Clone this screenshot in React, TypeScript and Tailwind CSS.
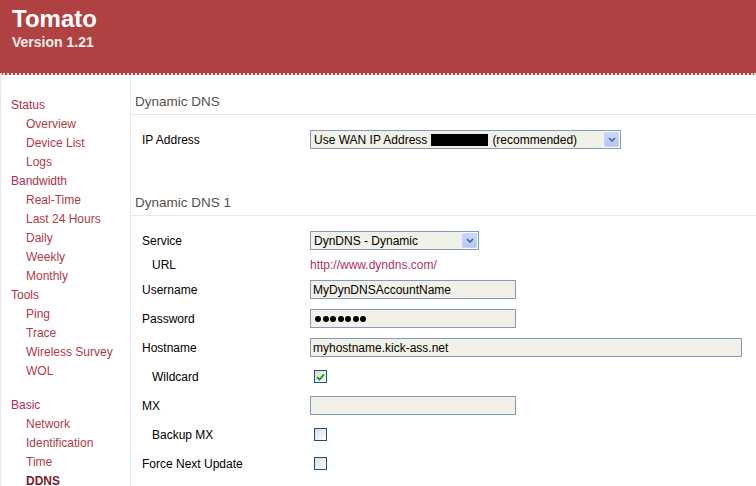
import React from 'react';

const menu = [
  { title: 'Status', items: ['Overview', 'Device List', 'Logs'] },
  { title: 'Bandwidth', items: ['Real-Time', 'Last 24 Hours', 'Daily', 'Weekly', 'Monthly'] },
  { title: 'Tools', items: ['Ping', 'Trace', 'Wireless Survey', 'WOL'] },
];

const basicMenu = ['Network', 'Identification', 'Time', 'DDNS'];

const Arrow = () => (
  <span className="flex h-[15px] w-[15px] items-center justify-center rounded-[1px] border border-[#c3d3fd] bg-gradient-to-b from-[#c9dafd] to-[#b3c7f3]">
    <svg width="8" height="5" viewBox="0 0 8 5">
      <path d="M1 1 L4 4 L7 1" fill="none" stroke="#4d6185" strokeWidth="1.6" />
    </svg>
  </span>
);

const Checkbox = ({ checked }: { checked?: boolean }) => (
  <span className="ml-[4px] flex h-[13px] w-[13px] items-center justify-center border border-[#1c5180] bg-gradient-to-br from-[#dcdcd7] to-white">
    {checked && (
      <svg width="9" height="8" viewBox="0 0 9 8">
        <path d="M1 4 L3.5 6.5 L8 1.5" fill="none" stroke="#21a121" strokeWidth="2" />
      </svg>
    )}
  </span>
);

const TextBox = ({ value, width }: { value: string; width: string }) => (
  <input
    type="text"
    readOnly
    value={value}
    className={`h-[19px] ${width} border border-[#7f9db9] bg-[#f2f1e9] px-[2px] text-[12px] text-black outline-none`}
  />
);

const Row = ({ label, indent, children, h = 'h-[29px]' }: { label: string; indent?: boolean; children?: React.ReactNode; h?: string }) => (
  <div className={`flex ${h} items-center pl-[11px]`}>
    <div className={`w-[168px] text-[12px] text-black ${indent ? 'pl-[10px]' : ''}`}>{label}</div>
    <div className="flex items-center">{children}</div>
  </div>
);

const Heading = ({ children }: { children: React.ReactNode }) => (
  <div className="border-b border-[#e6e6e6] pb-[3px] pl-[4px] text-[13.5px] leading-[18px] text-[#57504c]">{children}</div>
);

export default function App() {
  return (
    <div className="h-[486px] w-[756px] overflow-hidden bg-white font-['Liberation_Sans',Arial,sans-serif]">
      <div className="h-[75px] border-b-2 border-dotted border-[#dcdcdc] bg-[#b04243] pl-[12px] pt-[5px]">
        <div className="text-[24px] font-bold leading-[28px] text-white">Tomato</div>
        <div className="text-[14px] font-bold leading-[18px] text-[#f0ecec]">Version 1.21</div>
      </div>
      <div className="flex">
        <div className="w-[131px] shrink-0 border-l border-r border-[#e8e8e8] pt-[21px] text-[12px] leading-[19px]">
          {menu.map(g => (
            <div key={g.title}>
              <div className="pl-[10px] text-[#ad2f4b]">{g.title}</div>
              {g.items.map(i => (
                <div key={i} className="pl-[25px] text-[#ad3a4b]">{i}</div>
              ))}
            </div>
          ))}
          <div className="mt-[15px] pl-[10px] text-[#ad2f4b]">Basic</div>
          {basicMenu.map(i => (
            <div key={i} className={`pl-[25px] ${i === 'DDNS' ? 'font-bold text-[#7a1c2c]' : 'text-[#ad3a4b]'}`}>{i}</div>
          ))}
        </div>
        <div className="flex-1 pt-[18px]">
          <Heading>Dynamic DNS</Heading>
          <div className="mt-[10px]">
            <Row label="IP Address">
              <div className="flex h-[19px] w-[311px] items-center justify-between border border-[#7f9db9] bg-white pr-[1px]">
                <div className="flex h-[17px] flex-1 items-center bg-[#f2f1e9] pl-[3px] text-[12px]">
                  Use WAN IP Address <span className="mx-[4px] inline-block h-[12px] w-[57px] bg-black" />(recommended)
                </div>
                <Arrow />
              </div>
            </Row>
          </div>
          <div className="mt-[40px]">
            <Heading>Dynamic DNS 1</Heading>
          </div>
          <div className="mt-[10px]">
            <Row label="Service">
              <div className="flex h-[19px] w-[169px] items-center justify-between border border-[#7f9db9] bg-white pr-[1px]">
                <div className="flex h-[17px] flex-1 items-center bg-[#f2f1e9] pl-[3px] text-[12px]">DynDNS - Dynamic</div>
                <Arrow />
              </div>
            </Row>
            <Row label="URL" indent h="h-[20px]">
              <span className="text-[12px] text-[#b0306a]">http://www.dyndns.com/</span>
            </Row>
            <Row label="Username">
              <TextBox value="MyDynDNSAccountName" width="w-[206px]" />
            </Row>
            <Row label="Password">
              <div className="flex h-[19px] w-[206px] items-center gap-[1.5px] border border-[#7f9db9] bg-[#f2f1e9] pl-[4px]">
                {[0, 1, 2, 3, 4, 5, 6].map(i => (
                  <span key={i} className="h-[6px] w-[6px] rounded-full bg-black" />
                ))}
              </div>
            </Row>
            <Row label="Hostname">
              <TextBox value="myhostname.kick-ass.net" width="w-[432px]" />
            </Row>
            <Row label="Wildcard" indent>
              <Checkbox checked />
            </Row>
            <Row label="MX">
              <TextBox value="" width="w-[206px]" />
            </Row>
            <Row label="Backup MX" indent>
              <Checkbox />
            </Row>
            <Row label="Force Next Update">
              <Checkbox />
            </Row>
          </div>
        </div>
      </div>
    </div>
  );
}
